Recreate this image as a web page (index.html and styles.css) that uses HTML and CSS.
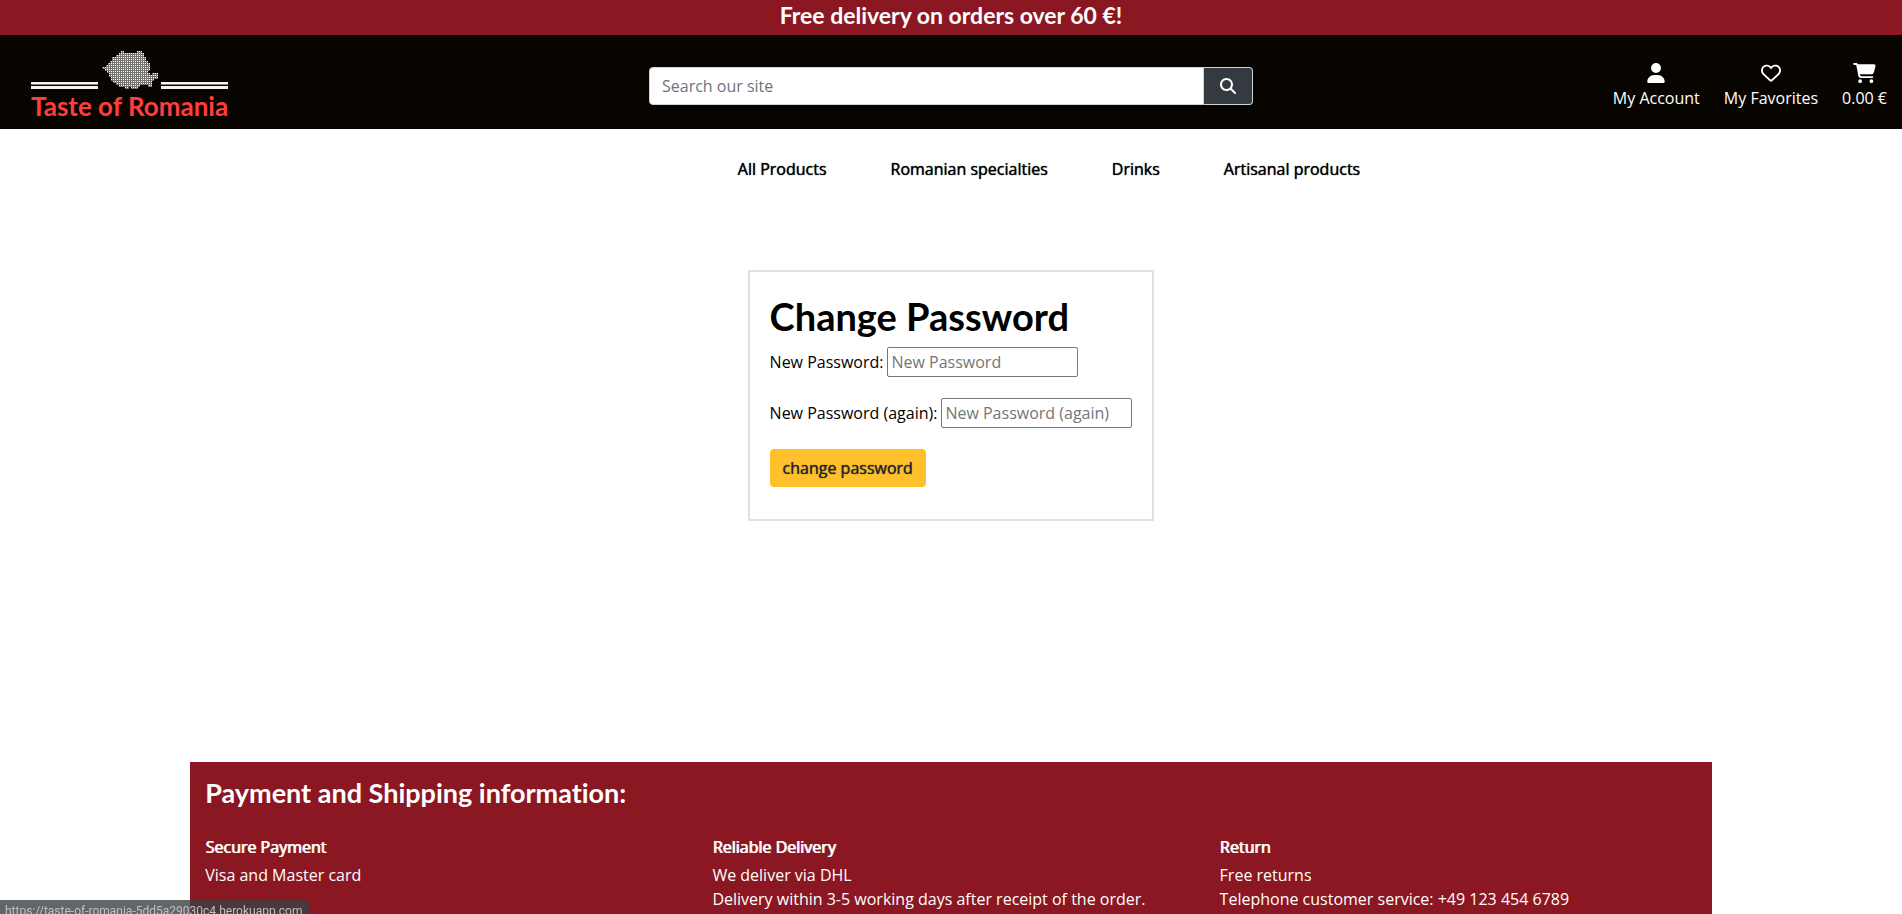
FILE: index.html
```html
<!DOCTYPE html>
<html lang="en">
<head>
<meta charset="utf-8">
<meta name="viewport" content="width=device-width, initial-scale=1">
<title>Taste of Romania</title>
<link rel="stylesheet" href="styles.css">
</head>
<body>
<div class="banner">Free delivery on orders over 60 €!</div>
<header class="header">
  <a class="logo" href="#">
    <svg class="logo-art" width="197" height="40" viewBox="0 0 197 40" aria-hidden="true">
      <defs>
        <pattern id="dots" width="2" height="2" patternUnits="userSpaceOnUse">
          <rect width="2" height="2" fill="#74726f"/>
          <rect width="1" height="1" fill="#fff"/>
        </pattern>
      </defs>
      <path fill="#f4f4ee" d="M0 31h67v2H0zM0 35h67v3H0zM130 31h67v2h-67zM130 35h67v3h-67z"/>
      <path fill="#85857c" d="M0 33h67v1H0zM130 33h67v1h-67z"/>
      <path fill="url(#dots)" d="M71 16h4v-2h2v-2h2v-2h2V6h4V4h3V2h2V0h3v2h13V0h5v2h2v4h2v4h2v2h2v8h-2v2h2v2h2v-2h6v6h-4v2h-2v6h-4v-2h-8v2h-2v2h-7v-2h-2v2h-4v-2h-6v-2h-3v-2h-3v-2h-2v-4h-2v-4h-2v-2h-2v-2h-2z"/>
    </svg>
    <span class="logo-name">Taste of Romania</span>
  </a>
  <form class="search">
    <input class="search-input" type="text" placeholder="Search our site" aria-label="Search our site">
    <button class="search-button" type="button" aria-label="Search">
      <svg width="16" height="16" viewBox="0 0 512 512" fill="currentColor"><path d="M416 208c0 45.900-14.900 88.300-40 122.700L502.600 457.400c12.500 12.500 12.500 32.800 0 45.300s-32.800 12.500-45.300 0L330.700 376c-34.400 25.200-76.800 40-122.700 40C93.100 416 0 322.900 0 208S93.100 0 208 0S416 93.100 416 208zM208 352a144 144 0 1 0 0-288 144 144 0 1 0 0 288z"/></svg>
    </button>
  </form>
  <nav class="account" aria-label="Account">
    <a href="#"><svg width="18" height="20" viewBox="0 0 448 512" fill="currentColor"><path d="M224 256A128 128 0 1 0 224 0a128 128 0 1 0 0 256zm-45.700 48C79.800 304 0 383.800 0 482.300C0 498.700 13.300 512 29.700 512H418.300c16.400 0 29.700-13.300 29.700-29.700C448 383.800 368.200 304 269.700 304H178.300z"/></svg>My Account</a>
    <a href="#"><svg width="20" height="20" viewBox="0 0 512 512" fill="currentColor"><path d="M225.800 468.200l-2.500-2.300L48.100 303.200C17.400 274.700 0 234.700 0 192.800v-3.300c0-70.400 50-130.800 119.200-144C158.600 37.900 198.900 47 231 69.600c9 6.400 17.400 13.800 25 22.300c4.200-4.800 8.700-9.200 13.500-13.300c3.700-3.200 7.500-6.200 11.500-9C313.100 47 353.400 37.900 392.800 45.400C462 58.600 512 119.100 512 189.500v3.300c0 41.900-17.400 81.900-48.100 110.400L288.700 465.900l-2.500 2.300c-8.200 7.600-19 11.900-30.200 11.900s-22-4.200-30.200-11.900zM239.100 145c-.4-.3-.7-.7-1-1.100l-17.800-20c-23.100-25.900-58-37.700-92-31.200C81.600 101.500 48 142.100 48 189.500v3.300c0 28.500 11.900 55.800 32.800 75.200L256 430.700 431.200 268c20.900-19.400 32.800-46.700 32.800-75.200v-3.300c0-47.300-33.600-88-80.100-96.900c-34-6.500-69 5.400-92 31.200l-18 20.200c-.3.400-.7.700-1 1.100c-4.500 4.500-10.600 7-16.900 7s-12.400-2.500-16.900-7z"/></svg>My Favorites</a>
    <a href="#"><svg width="23" height="20" viewBox="0 0 576 512" fill="currentColor"><path d="M0 24C0 10.700 10.700 0 24 0H69.500c22 0 41.500 12.800 50.600 32h411c26.300 0 45.500 25 38.600 50.400l-41 152.300c-8.500 31.400-37 53.300-69.500 53.300H170.700l5.400 28.500c2.200 11.300 12.100 19.500 23.600 19.500H488c13.300 0 24 10.700 24 24s-10.700 24-24 24H199.700c-34.600 0-64.300-24.600-70.700-58.500L77.400 54.500c-.7-3.800-4-6.500-7.900-6.500H24C10.700 48 0 37.300 0 24zM128 464a48 48 0 1 1 96 0 48 48 0 1 1 -96 0zm336-48a48 48 0 1 1 0 96 48 48 0 1 1 0-96z"/></svg>0.00 €</a>
  </nav>
</header>
<nav class="menu" aria-label="Products">
  <a href="#">All Products</a>
  <a href="#">Romanian specialties</a>
  <a href="#">Drinks</a>
  <a href="#">Artisanal products</a>
</nav>
<main class="main">
  <form class="card">
    <h1 class="card-title">Change Password</h1>
    <div class="field">
      <label for="password1">New Password:</label>
      <input id="password1" type="password" placeholder="New Password">
    </div>
    <div class="field">
      <label for="password2">New Password (again):</label>
      <input id="password2" type="password" placeholder="New Password (again)">
    </div>
    <button class="submit" type="button">change password</button>
  </form>
</main>
<footer class="footer">
  <h2 class="footer-title">Payment and Shipping information:</h2>
  <div class="footer-columns">
    <section>
      <h3>Secure Payment</h3>
      <p>Visa and Master card</p>
    </section>
    <section>
      <h3>Reliable Delivery</h3>
      <p>We deliver via DHL</p>
      <p>Delivery within 3-5 working days after receipt of the order.</p>
    </section>
    <section>
      <h3>Return</h3>
      <p>Free returns</p>
      <p>Telephone customer service: +49 123 454 6789</p>
    </section>
  </div>
</footer>
<div class="status">https://taste-of-romania-5dd5a29030c4.herokuapp.com</div>
</body>
</html>
```
FILE: styles.css
```css
* {
  box-sizing: border-box;
}

body {
  margin: 0;
  min-height: 100vh;
  display: flex;
  flex-direction: column;
  background: #fff;
  color: #000;
  font: 400 16px/24px "Open Sans", sans-serif;
}

a {
  color: inherit;
  text-decoration: none;
}

h1,
h2,
h3,
p {
  margin: 0;
}

.banner,
.logo-name,
.card-title,
.footer-title {
  font-family: Lato, sans-serif;
  font-weight: 700;
  font-variant-ligatures: none;
}

.banner {
  padding: 1px 0 5px;
  background: #8a1722;
  color: #fff;
  font-size: 23px;
  line-height: 29px;
  text-align: center;
}

.header {
  display: grid;
  grid-template-columns: 1fr 1fr 1fr;
  align-items: center;
  background: #080500;
  color: #fff;
}

.logo {
  display: flex;
  flex-direction: column;
  align-items: flex-start;
  padding: 16px 0 8px 31px;
}

.logo-art {
  display: block;
}

.logo-name {
  color: #ff3e3b;
  font-size: 26px;
  line-height: 30px;
}

.search {
  display: flex;
  margin: 8px 15px 0;
}

.search-input {
  flex: 1;
  min-width: 0;
  height: 38px;
  padding: 6px 12px;
  border: 1px solid #ced4da;
  border-radius: 4px 0 0 4px;
  background: #fff;
  font: inherit;
}

.search-input::placeholder {
  color: #6c757d;
}

.search-button {
  display: flex;
  align-items: center;
  justify-content: center;
  width: 49px;
  height: 38px;
  padding: 0;
  border: 1px solid #ced4da;
  border-left: 0;
  border-radius: 0 4px 4px 0;
  background: #343a40;
  color: #fff;
}

.account {
  display: flex;
  justify-content: flex-end;
  gap: 24px;
  padding: 8px 15px 0 0;
}

.account a {
  display: flex;
  flex-direction: column;
  align-items: center;
  gap: 3px;
}

.menu {
  display: flex;
  justify-content: center;
  gap: 64px;
  padding: 28px 0 28px 196px;
}

.menu a,
.submit {
  text-shadow: 0 0 1px currentColor;
}

.main {
  flex: 1;
  display: flex;
  justify-content: center;
  align-items: flex-start;
  padding: 61px 0 80px;
}

.card {
  padding: 20px 20px 32px;
  border: 2px solid #dee2e6;
}

.card-title {
  margin-bottom: 7px;
  font-size: 38px;
  line-height: 48px;
}

.field {
  display: flex;
  align-items: center;
  gap: 4px;
  margin-bottom: 21px;
}

.field input {
  width: 191px;
  height: 30px;
  padding: 1px 3px;
  border: 1px solid #767676;
  border-radius: 2px;
  font: inherit;
}

.field input::placeholder {
  color: #757575;
}

.submit {
  display: block;
  padding: 7px 13px;
  border: 0;
  border-radius: 4px;
  background: #ffc02c;
  color: #212529;
  font: inherit;
}

.footer {
  width: 80%;
  margin: 0 auto;
  padding: 14px 0 3px;
  background: #8a1722;
  color: #fff;
}

.footer-title {
  margin: 0 15px 25px;
  font-size: 27px;
  line-height: 34px;
}

.footer-columns {
  display: grid;
  grid-template-columns: repeat(3, 1fr);
}

.footer-columns section {
  padding: 0 15px;
}

.footer h3 {
  margin-bottom: 4px;
  font-size: 16px;
  font-weight: 400;
  line-height: 24px;
  text-shadow: 1px 0 currentColor;
}

.status {
  position: fixed;
  left: 0;
  bottom: 0;
  height: 14px;
  padding: 2px 7px 0 5px;
  overflow: hidden;
  border-radius: 0 4px 0 0;
  background: rgba(60, 64, 67, 0.8);
  color: #bdc1c6;
  font: 12px/18px Roboto, sans-serif;
}
```
